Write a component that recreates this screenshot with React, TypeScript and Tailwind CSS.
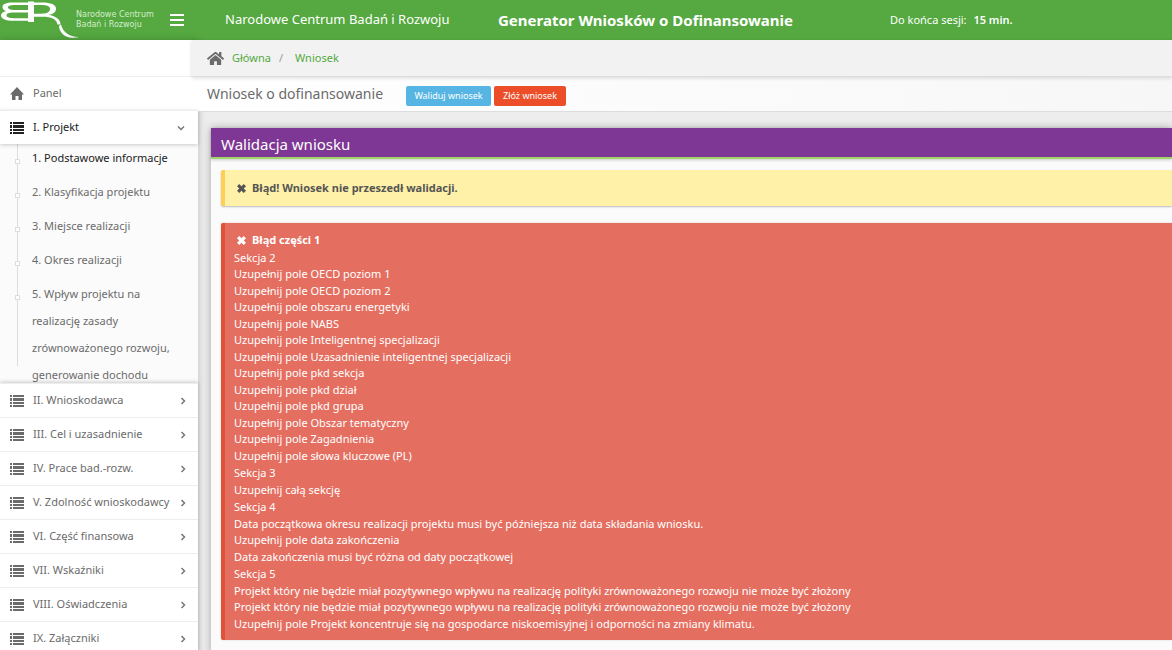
import { FaHome } from 'react-icons/fa';

type Section = { title: string; errors: string[] };

const sections: Section[] = [
  {
    title: 'Sekcja 2',
    errors: [
      'Uzupełnij pole OECD poziom 1',
      'Uzupełnij pole OECD poziom 2',
      'Uzupełnij pole obszaru energetyki',
      'Uzupełnij pole NABS',
      'Uzupełnij pole Inteligentnej specjalizacji',
      'Uzupełnij pole Uzasadnienie inteligentnej specjalizacji',
      'Uzupełnij pole pkd sekcja',
      'Uzupełnij pole pkd dział',
      'Uzupełnij pole pkd grupa',
      'Uzupełnij pole Obszar tematyczny',
      'Uzupełnij pole Zagadnienia',
      'Uzupełnij pole słowa kluczowe (PL)',
    ],
  },
  { title: 'Sekcja 3', errors: ['Uzupełnij całą sekcję'] },
  {
    title: 'Sekcja 4',
    errors: [
      'Data początkowa okresu realizacji projektu musi być późniejsza niż data składania wniosku.',
      'Uzupełnij pole data zakończenia',
      'Data zakończenia musi być różna od daty początkowej',
    ],
  },
  {
    title: 'Sekcja 5',
    errors: [
      'Projekt który nie będzie miał pozytywnego wpływu na realizację polityki zrównoważonego rozwoju nie może być złożony',
      'Projekt który nie będzie miał pozytywnego wpływu na realizację polityki zrównoważonego rozwoju nie może być złożony',
      'Uzupełnij pole Projekt koncentruje się na gospodarce niskoemisyjnej i odporności na zmiany klimatu.',
    ],
  },
];

const subItems = [
  '1. Podstawowe informacje',
  '2. Klasyfikacja projektu',
  '3. Miejsce realizacji',
  '4. Okres realizacji',
  '5. Wpływ projektu na realizację zasady zrównoważonego rozwoju, generowanie dochodu',
];

const menuItems = [
  'II. Wnioskodawca',
  'III. Cel i uzasadnienie',
  'IV. Prace bad.-rozw.',
  'V. Zdolność wnioskodawcy',
  'VI. Część finansowa',
  'VII. Wskaźniki',
  'VIII. Oświadczenia',
  'IX. Załączniki',
];

function MenuIcon() {
  return (
    <svg viewBox="0 0 14 12" className="h-3 w-[14px]" fill="currentColor" aria-hidden="true">
      <path d="M0 0h14v2H0zM0 5h14v2H0zM0 10h14v2H0z" />
    </svg>
  );
}

function ListIcon() {
  return (
    <svg viewBox="0 0 14 12" className="h-3 w-[14px] shrink-0" fill="currentColor" aria-hidden="true">
      <path d="M0 0h2v2H0zM3 0h11v2H3zM0 3h2v3H0zM3 3h11v3H3zM0 7h2v2H0zM3 7h11v2H3zM0 10h2v2H0zM3 10h11v2H3z" />
    </svg>
  );
}

function HouseIcon() {
  return (
    <svg viewBox="0 0 14 13" className="h-[13px] w-[14px] shrink-0" fill="currentColor" aria-hidden="true">
      <path d="M7 0 14 7.500H12V13H8.500V9H5.500V13H2V7.500H0z" />
    </svg>
  );
}

function CrossIcon() {
  return (
    <svg viewBox="0 0 10 10" className="h-[9px] w-[9px] shrink-0" fill="currentColor" aria-hidden="true">
      <path d="M2.500 0 5 2.500 7.500 0 10 2.500 7.500 5 10 7.500 7.500 10 5 7.500 2.500 10 0 7.500 2.500 5 0 2.500z" />
    </svg>
  );
}

function Chevron({ down = false }: { down?: boolean }) {
  return (
    <svg
      viewBox="0 0 8 8"
      className="h-2 w-2 shrink-0 text-[#777777]"
      fill="none"
      stroke="currentColor"
      strokeWidth="1.5"
      aria-hidden="true"
    >
      <path d={down ? 'M1 2.500 4 5.500 7 2.500' : 'M2.500 1 5.500 4 2.500 7'} />
    </svg>
  );
}

function Logo() {
  return (
    <svg viewBox="0 0 80 40" className="h-10 w-20 shrink-0" fill="white" fillRule="evenodd" aria-hidden="true">
      <path d="M34 1.500V22H28V20.800H14C5 20.800 1 18.500 1 15.500 1 13.300 3 11.800 6 11.200 3.500 10.200 2.500 8.800 2.500 7 2.500 4 6 2.400 13 2.400H28V1.500zM28 5H17C11 5 8 5.500 8 7.200 8 9.200 11 10 17 10H28zM28 12.500H16C10 12.500 6.500 13 6.500 15.200 6.500 17.500 10 18.200 16 18.200H28z" />
      <path d="M34 2.400H42C51 2.400 56 4.500 56 8.700 56 12.300 52.500 14.300 48.500 14.800 55 16 60.500 19 60.500 24.500H57.500C56.500 19 51 16.800 43 16.800H34V13.700H41C47 13.700 50 12 50 9 50 6 47 5 41 5H34z" />
      <path d="M61 24.500 59 26C59 32 65 37.800 72 37.800 75 37.800 77 37.600 78.500 37 69 36.500 63 32.500 61 24.500z" />
    </svg>
  );
}

export default function App() {
  return (
    <div className="flex min-h-screen flex-col bg-[#ededed] font-['Noto_Sans',sans-serif] text-[11px] text-[#6b6b6b]">
      <header className="flex h-10 shrink-0 items-center bg-[#55a940] text-white">
        <Logo />
        <div className="-ml-1 w-[94px] shrink-0 whitespace-nowrap font-['DejaVu_Sans',sans-serif] text-[8px] leading-[10px] text-[#d6eccf]">
          <p>Narodowe Centrum</p>
          <p>Badań i Rozwoju</p>
        </div>
        <button type="button" aria-label="Menu" className="w-[55px] shrink-0">
          <MenuIcon />
        </button>
        <span className="w-[273px] shrink-0 text-[13px]">Narodowe Centrum Badań i Rozwoju</span>
        <h1 className="w-[392px] shrink-0 text-[15px] font-bold">Generator Wniosków o Dofinansowanie</h1>
        <span className="whitespace-nowrap">
          Do końca sesji: <b className="ml-1 font-semibold">15 min.</b>
        </span>
      </header>

      <div className="flex grow">
        <aside className="w-[198px] shrink-0 bg-white shadow-[0_0_8px_rgba(0,0,0,0.2)]">
          <nav className="pt-9">
            <a href="#panel" className="flex h-[34px] items-center gap-[9px] border-t border-[#eeeeee] pl-[10px]">
              <HouseIcon />
              Panel
            </a>
            <a
              href="#projekt"
              className="relative flex h-[34px] items-center border-t border-[#eeeeee] pl-[10px] pr-[13px] text-[#222222] shadow-[0_1px_4px_rgba(0,0,0,0.2)]"
            >
              <ListIcon />
              <span className="ml-[9px] grow">I. Projekt</span>
              <Chevron down />
            </a>
            <div className="h-[239px] overflow-hidden bg-[#fbfbfb] pl-[17px]">
              <ul className="h-[222px] border-l border-[#dddddd]">
                {subItems.map((item, i) => (
                  <li key={item} className="relative pb-[7px] pl-[14px] pr-3 leading-[27px]">
                    <span className="absolute left-[-3px] top-[15px] h-[5px] w-[5px] border border-[#dddddd] bg-white" />
                    <a href="#podsekcja" className={i === 0 ? 'text-[#222222]' : ''}>
                      {item}
                    </a>
                  </li>
                ))}
              </ul>
            </div>
            <ul className="relative shadow-[0_-1px_4px_rgba(0,0,0,0.2)]">
              {menuItems.map((item) => (
                <li key={item}>
                  <a href="#sekcja" className="flex h-[34px] items-center border-t border-[#eeeeee] bg-white pl-[10px] pr-[11px]">
                    <ListIcon />
                    <span className="ml-[9px] grow whitespace-nowrap">{item}</span>
                    <Chevron />
                  </a>
                </li>
              ))}
            </ul>
          </nav>
        </aside>

        <main className="flex min-w-0 grow flex-col">
          <nav className="relative -ml-[6px] flex h-[37px] items-center border-b border-[#dddddd] bg-[#f2f2f2] pl-[15px] shadow-[0_1px_4px_rgba(0,0,0,0.15)]">
            <FaHome className="mr-2 h-[17px] w-[17px]" />
            <a href="#glowna" className="text-[#55a940]">
              Główna
            </a>
            <span className="mx-2 text-[#999999]">/</span>
            <a href="#wniosek" className="ml-1 text-[#55a940]">
              Wniosek
            </a>
          </nav>
          <div className="flex h-[35px] items-center border-b border-[#dddddd] bg-gradient-to-r from-white to-[#f7f7f7] pl-[9px]">
            <h2 className="w-[199px] text-sm">Wniosek o dofinansowanie</h2>
            <button type="button" className="mr-[3px] mt-1 h-5 w-[85px] rounded-xs bg-[#57b5e3] text-[9px] text-white">
              Waliduj wniosek
            </button>
            <button type="button" className="mt-1 h-5 w-[72px] rounded-xs bg-[#ed4e2a] text-[9px] text-white">
              Złóż wniosek
            </button>
          </div>

          <section className="ml-[13px] mt-4 grow bg-[#fbfbfb] shadow-[0_0_8px_rgba(0,0,0,0.3)]">
            <h3 className="h-[31px] border-b-2 border-[#a0d468] bg-[#7e3794] pl-[10px] pt-1 text-[15px] leading-6 text-white shadow-[0_1px_3px_rgba(0,0,0,0.2)]">
              Walidacja wniosku
            </h3>
            <div className="flex flex-col gap-[17px] pl-[10px] pt-[11px]">
              <div className="flex h-9 items-center gap-[6px] rounded-l-xs border-l-4 border-[#ffce55] bg-[#fff1a8] pl-3 font-bold text-[#555555] shadow-[0_1px_2px_rgba(0,0,0,0.25)]">
                <CrossIcon />
                Błąd! Wniosek nie przeszedł walidacji.
              </div>
              <div className="flex flex-col gap-px rounded-l-xs border-l-4 border-[#df5138] bg-[#e46f61] pb-2 pl-[9px] pt-[9px] leading-normal text-white shadow-[0_0_2px_rgba(0,0,0,0.2)]">
                <div className="flex items-center gap-[6px] pl-[3px] font-bold">
                  <CrossIcon />
                  Błąd części 1
                </div>
                {sections.map((section) => (
                  <div key={section.title}>
                    <p>{section.title}</p>
                    {section.errors.map((error, i) => (
                      <p key={i}>{error}</p>
                    ))}
                  </div>
                ))}
              </div>
            </div>
          </section>
        </main>
      </div>
    </div>
  );
}
